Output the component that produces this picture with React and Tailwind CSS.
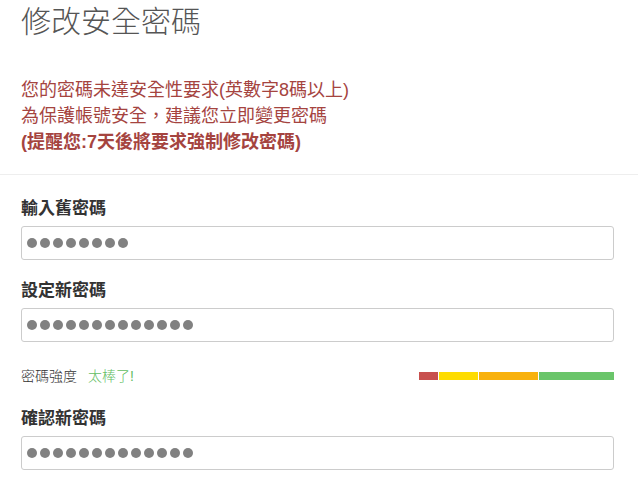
import React from 'react';

const FONT = { fontFamily: '"Liberation Sans", "Noto Sans CJK TC", sans-serif' };

function Dots({ count }) {
    return (
        <div className="flex items-center gap-[3px]">
            {Array.from({ length: count }).map((_, i) => (
                <span key={i} className="block w-[10px] h-[10px] rounded-full bg-[#818181]"></span>
            ))}
        </div>
    );
}

function PasswordField({ label, count, className = '' }) {
    return (
        <div className={className}>
            <label className="block text-[17px] font-semibold leading-[24px] text-[#333] mb-[5px]">{label}</label>
            <div className="h-[34px] border border-[#cccccc] rounded-[3px] bg-white flex items-center pl-[5px]">
                <Dots count={count} />
            </div>
        </div>
    );
}

export default function App() {
    return (
        <div className="w-[638px] h-[490px] bg-white overflow-hidden" style={FONT}>
            <div className="border-b border-[#eeeeee] pl-[21px] pr-[24px] pb-[19px]">
                <h1 className="text-[30px] font-light leading-[43px] text-[#555]">修改安全密碼</h1>
                <div className="mt-[34px] text-[18px] leading-[26px] text-[#a5443f]">
                    <p>您的密碼未達安全性要求(英數字8碼以上)</p>
                    <p>為保護帳號安全，建議您立即變更密碼</p>
                    <p className="font-bold">(提醒您:7天後將要求強制修改密碼)</p>
                </div>
            </div>

            <form className="pl-[21px] pr-[24px] pt-[22px]">
                <PasswordField label="輸入舊密碼" count={8} />
                <PasswordField label="設定新密碼" count={13} className="mt-[19px]" />

                <div className="mt-[24px] h-[20px] flex items-center justify-between">
                    <div className="text-[14px] font-light text-[#333]">
                        密碼強度<span className="ml-[11px] text-[#62bd62]">太棒了!</span>
                    </div>
                    <div className="flex gap-[1px] h-[8px]">
                        <div className="w-[19px] bg-[#c8504e]"></div>
                        <div className="w-[39px] bg-[#fedc00]"></div>
                        <div className="w-[59px] bg-[#f8b10d]"></div>
                        <div className="w-[75px] bg-[#6ac56a]"></div>
                    </div>
                </div>

                <PasswordField label="確認新密碼" count={13} className="mt-[21px]" />
            </form>
        </div>
    );
}
